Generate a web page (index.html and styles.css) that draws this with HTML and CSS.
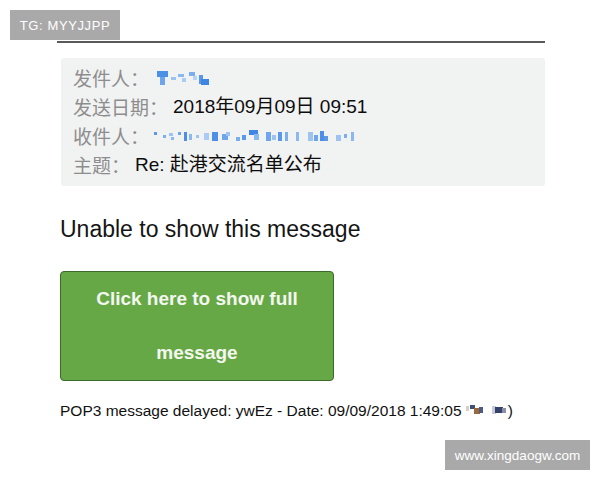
FILE: index.html
```html
<!DOCTYPE html>
<html lang="zh-CN">
<head>
<meta charset="utf-8">
<title>Message</title>
<link rel="stylesheet" href="styles.css">
</head>
<body>
<div class="page">
  <div class="rule"></div>
  <div class="headers">
    <div class="row">
      <span class="label">发件人：</span>
      <span class="blur gap-s">
        <svg width="56" height="18" viewBox="0 0 56 18">
          <rect x="0" y="2" width="11" height="6" fill="#4d8fe6"/>
          <rect x="3" y="8" width="5" height="8" fill="#6da6ee"/>
          <rect x="14" y="8" width="5" height="3" fill="#9cc3f2"/>
          <rect x="21" y="5" width="6" height="3" fill="#8ab8f0"/>
          <rect x="25" y="9" width="4" height="4" fill="#a9cbf4"/>
          <rect x="32" y="3" width="6" height="4" fill="#7aaeee"/>
          <rect x="36" y="7" width="4" height="4" fill="#b6d3f6"/>
          <rect x="42" y="6" width="4" height="9" fill="#5a97e8"/>
          <rect x="44" y="10" width="8" height="6" fill="#3f86e2"/>
        </svg>
      </span>
    </div>
    <div class="row">
      <span class="label">发送日期：</span>
      <span class="value">2018年09月09日 09:51</span>
    </div>
    <div class="row">
      <span class="label">收件人：</span>
      <span class="blur">
        <svg width="250" height="18" viewBox="0 0 250 18">
          <rect x="0" y="5" width="3" height="3" fill="#5b98e8"/>
          <rect x="9" y="8" width="3" height="3" fill="#7aaeee"/>
          <rect x="15" y="6" width="4" height="3" fill="#9cc3f2"/>
          <rect x="17" y="10" width="3" height="3" fill="#8ab8f0"/>
          <rect x="24" y="5" width="3" height="3" fill="#6da6ee"/>
          <rect x="30" y="5" width="3" height="9" fill="#4d8fe6"/>
          <rect x="35" y="7" width="3" height="6" fill="#8ab8f0"/>
          <rect x="42" y="8" width="3" height="3" fill="#9cc3f2"/>
          <rect x="50" y="6" width="5" height="7" fill="#a9cbf4"/>
          <rect x="58" y="5" width="6" height="9" fill="#4d8fe6"/>
          <rect x="68" y="7" width="6" height="6" fill="#6da6ee"/>
          <rect x="72" y="5" width="4" height="4" fill="#9cc3f2"/>
          <rect x="82" y="10" width="4" height="4" fill="#7aaeee"/>
          <rect x="88" y="8" width="4" height="5" fill="#5b98e8"/>
          <rect x="95" y="3" width="9" height="5" fill="#4385e2"/>
          <rect x="100" y="7" width="5" height="6" fill="#8ab8f0"/>
          <rect x="112" y="5" width="5" height="9" fill="#6da6ee"/>
          <rect x="118" y="8" width="4" height="5" fill="#9cc3f2"/>
          <rect x="124" y="5" width="4" height="9" fill="#5b98e8"/>
          <rect x="131" y="5" width="3" height="9" fill="#7aaeee"/>
          <rect x="142" y="5" width="3" height="9" fill="#8ab8f0"/>
          <rect x="154" y="5" width="5" height="9" fill="#9cc3f2"/>
          <rect x="160" y="8" width="4" height="6" fill="#6da6ee"/>
          <rect x="166" y="4" width="4" height="10" fill="#4d8fe6"/>
          <rect x="170" y="9" width="4" height="5" fill="#5b98e8"/>
          <rect x="182" y="8" width="5" height="6" fill="#9cc3f2"/>
          <rect x="190" y="7" width="3" height="4" fill="#7aaeee"/>
          <rect x="197" y="5" width="3" height="9" fill="#8ab8f0"/>
        </svg>
      </span>
    </div>
    <div class="row">
      <span class="label">主题：</span>
      <span class="value">Re: 赴港交流名单公布</span>
    </div>
  </div>

  <h1 class="title">Unable to show this message</h1>

  <div class="button">Click here to show full message</div>

  <p class="footer">POP3 message delayed: ywEz - Date: 09/09/2018 1:49:05 <span class="tail"><svg width="42" height="14" viewBox="0 0 42 14">
      <rect x="0" y="3" width="3" height="5" fill="#d9cfc2"/>
      <rect x="4" y="2" width="5" height="4" fill="#3d4f73"/>
      <rect x="8" y="5" width="6" height="6" fill="#9a6a3c"/>
      <rect x="13" y="4" width="4" height="6" fill="#4b5c80"/>
      <rect x="26" y="3" width="4" height="8" fill="#c7cad6"/>
      <rect x="29" y="4" width="8" height="6" fill="#34416a"/>
      <rect x="36" y="5" width="4" height="5" fill="#8b90a8"/>
    </svg></span>)</p>
</div>

<div class="badge badge-tl">TG: MYYJJPP</div>
<div class="badge badge-br">www.xingdaogw.com</div>
</body>
</html>
```

FILE: styles.css
```css
html, body {
  margin: 0;
  padding: 0;
  background: #ffffff;
}

body {
  width: 600px;
  height: 480px;
  position: relative;
  overflow: hidden;
  font-family: "Liberation Sans", "Noto Sans CJK SC", sans-serif;
  color: #111111;
}

.page {
  padding: 41px 0 0 57px;
  width: 488px;
}

.rule {
  height: 2px;
  background: #5a5a5a;
}

.headers {
  margin: 15px 0 0 4px;
  background: #f1f2f2;
  border-radius: 3px;
  padding: 5px 12px 7px;
  display: flex;
  flex-direction: column;
}

.row {
  display: flex;
  align-items: center;
  height: 29px;
  font-size: 19px;
  line-height: 29px;
}

.label {
  font-family: "Noto Sans CJK SC", sans-serif;
  color: #8d8d8d;
  margin-right: 5px;
}

.value {
  color: #0d0d0d;
}

.blur {
  display: flex;
  align-items: center;
  height: 29px;
}

.gap-s {
  margin-left: 3px;
}

.blur svg {
  display: block;
  filter: blur(0.4px);
}

.title {
  margin: 29px 0 0 3px;
  font-size: 23px;
  line-height: 28px;
  font-weight: normal;
  color: #151515;
}

.button {
  margin: 28px 0 0 3px;
  width: 274px;
  border: 1px solid #3c6a2c;
  border-radius: 4px;
  background: #67a846;
  color: #f3f7ef;
  font-weight: bold;
  font-size: 19px;
  line-height: 54px;
  text-align: center;
  padding: 0 4px;
  box-sizing: border-box;
}

.footer {
  margin: 20px 0 0 3px;
  font-size: 15.5px;
  line-height: 20px;
  color: #111111;
  white-space: nowrap;
}

.tail svg {
  vertical-align: -1px;
  filter: blur(0.4px);
}

.badge {
  position: absolute;
  background: #a9a9a9;
  color: #ffffff;
  font-family: "Liberation Sans", sans-serif;
  font-size: 13px;
  display: flex;
  align-items: center;
  justify-content: center;
}

.badge-tl {
  left: 10px;
  top: 10px;
  width: 110px;
  height: 30px;
  letter-spacing: 0.6px;
}

.badge-br {
  left: 445px;
  top: 440px;
  width: 145px;
  height: 30px;
  font-size: 13.5px;
}
```
